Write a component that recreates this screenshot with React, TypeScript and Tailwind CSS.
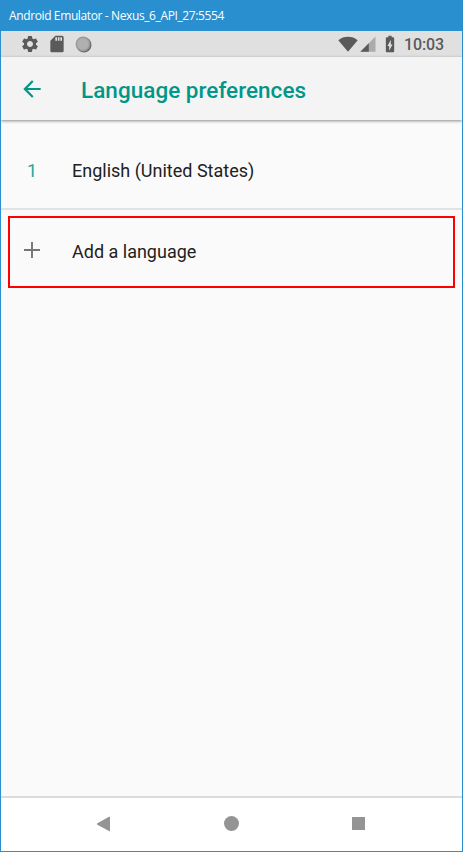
import { MdArrowBack, MdBatteryChargingFull, MdSdCard, MdSettings } from 'react-icons/md';

function TitleBar() {
  return (
    <header className="flex h-[31px] shrink-0 items-center bg-[#298fce] pl-[8px]">
      <span className="whitespace-nowrap font-['Open_Sans',sans-serif] text-[12px] leading-[16px] tracking-[-0.38px] text-white">
        Android Emulator - Nexus_6_API_27:5554
      </span>
    </header>
  );
}

function StatusBar() {
  return (
    <div className="flex h-[26px] shrink-0 items-center bg-[#e0e0e0] pr-[18px] pl-[19px] text-[#5a5a5a]">
      <MdSettings className="size-[20px]" />
      <MdSdCard className="ml-[7px] size-[20px]" />
      <svg className="ml-[8px] size-[17px]" viewBox="0 0 17 17">
        <circle cx="8.9" cy="8.9" r="7.6" fill="#686868" />
        <circle cx="8" cy="8" r="7.4" fill="#999" />
        <circle cx="7.9" cy="7.9" r="6" fill="#b0b0b0" stroke="#a2a2a2" strokeDasharray="1 1" />
      </svg>
      <div className="flex-1" />
      <svg className="h-[16px] w-[20px]" viewBox="0 0 20 16" fill="currentColor">
        <path d="M.3 4.2C5.7-.4 14.3-.4 19.7 4.2L10 15.8Z" />
      </svg>
      <svg className="ml-[2px] h-[16px] w-[16px]" viewBox="0 0 16 16">
        <path d="M.3 15.8L15.5.6V15.8Z" fill="#acacac" />
        <path d="M.3 15.8L8.8 7.3V15.8Z" fill="currentColor" />
      </svg>
      <MdBatteryChargingFull className="ml-[4px] size-[20px]" />
      <span className="mt-[2px] ml-[4px] font-['Roboto',sans-serif] text-[16px] leading-[20px] font-medium tracking-[-0.1px]">10:03</span>
    </div>
  );
}

function AppBar() {
  return (
    <div className="z-10 flex h-[63px] shrink-0 items-center bg-[#f4f4f4] pl-[18px] text-[#009688] shadow-[0_1px_3px_rgba(0,0,0,0.45)]">
      <MdArrowBack className="mt-[1px] size-[26px]" />
      <h1 className="mt-[2px] ml-[36px] whitespace-nowrap font-['Roboto',sans-serif] text-[22.5px] leading-[28px] font-medium tracking-[0.03px]">
        Language preferences
      </h1>
    </div>
  );
}

function LanguageList() {
  return (
    <main className="flex-1 bg-[#fafafa] pt-[12px] font-['Roboto',sans-serif] text-[18px] leading-[24px] text-[#212121]">
      <div className="flex h-[78px] items-center border-b-2 border-[#e2e2e2] pt-[2px]">
        <span className="w-[71px] pl-[26px] text-[#26a69a]">1</span>
        <span className="whitespace-nowrap">English (United States)</span>
      </div>
      <button className="mt-[6px] ml-[7px] flex h-[72px] w-[447px] items-center border-2 border-[#ff0000] text-left">
        <svg className="mb-[4px] ml-[13px] size-[18px]" viewBox="0 0 18 18" stroke="#757575" strokeWidth="1.9">
          <path d="M9 1V17M1 9H17" />
        </svg>
        <span className="ml-[31px] whitespace-nowrap">Add a language</span>
      </button>
    </main>
  );
}

function NavigationBar() {
  return (
    <nav className="flex h-[55px] shrink-0 items-center border-t-2 border-[#dcdcdc] bg-white pb-[2px] pl-[95px] text-[#949494]">
      <svg className="size-[16px]" viewBox="0 0 16 16" fill="currentColor">
        <path d="M13 .8Q14 .4 14 1.6V14.4Q14 15.6 13 15.1L1.4 8.7Q.2 8 1.4 7.3Z" />
      </svg>
      <span className="ml-[111.5px] size-[15px] rounded-full bg-[#949494]" />
      <span className="ml-[113.5px] size-[13px] bg-[#949494]" />
    </nav>
  );
}

export default function App() {
  return (
    <div className="flex h-[852px] w-[463px] flex-col overflow-hidden border-r border-b border-l border-[#298fce]">
      <TitleBar />
      <StatusBar />
      <AppBar />
      <LanguageList />
      <NavigationBar />
    </div>
  );
}
